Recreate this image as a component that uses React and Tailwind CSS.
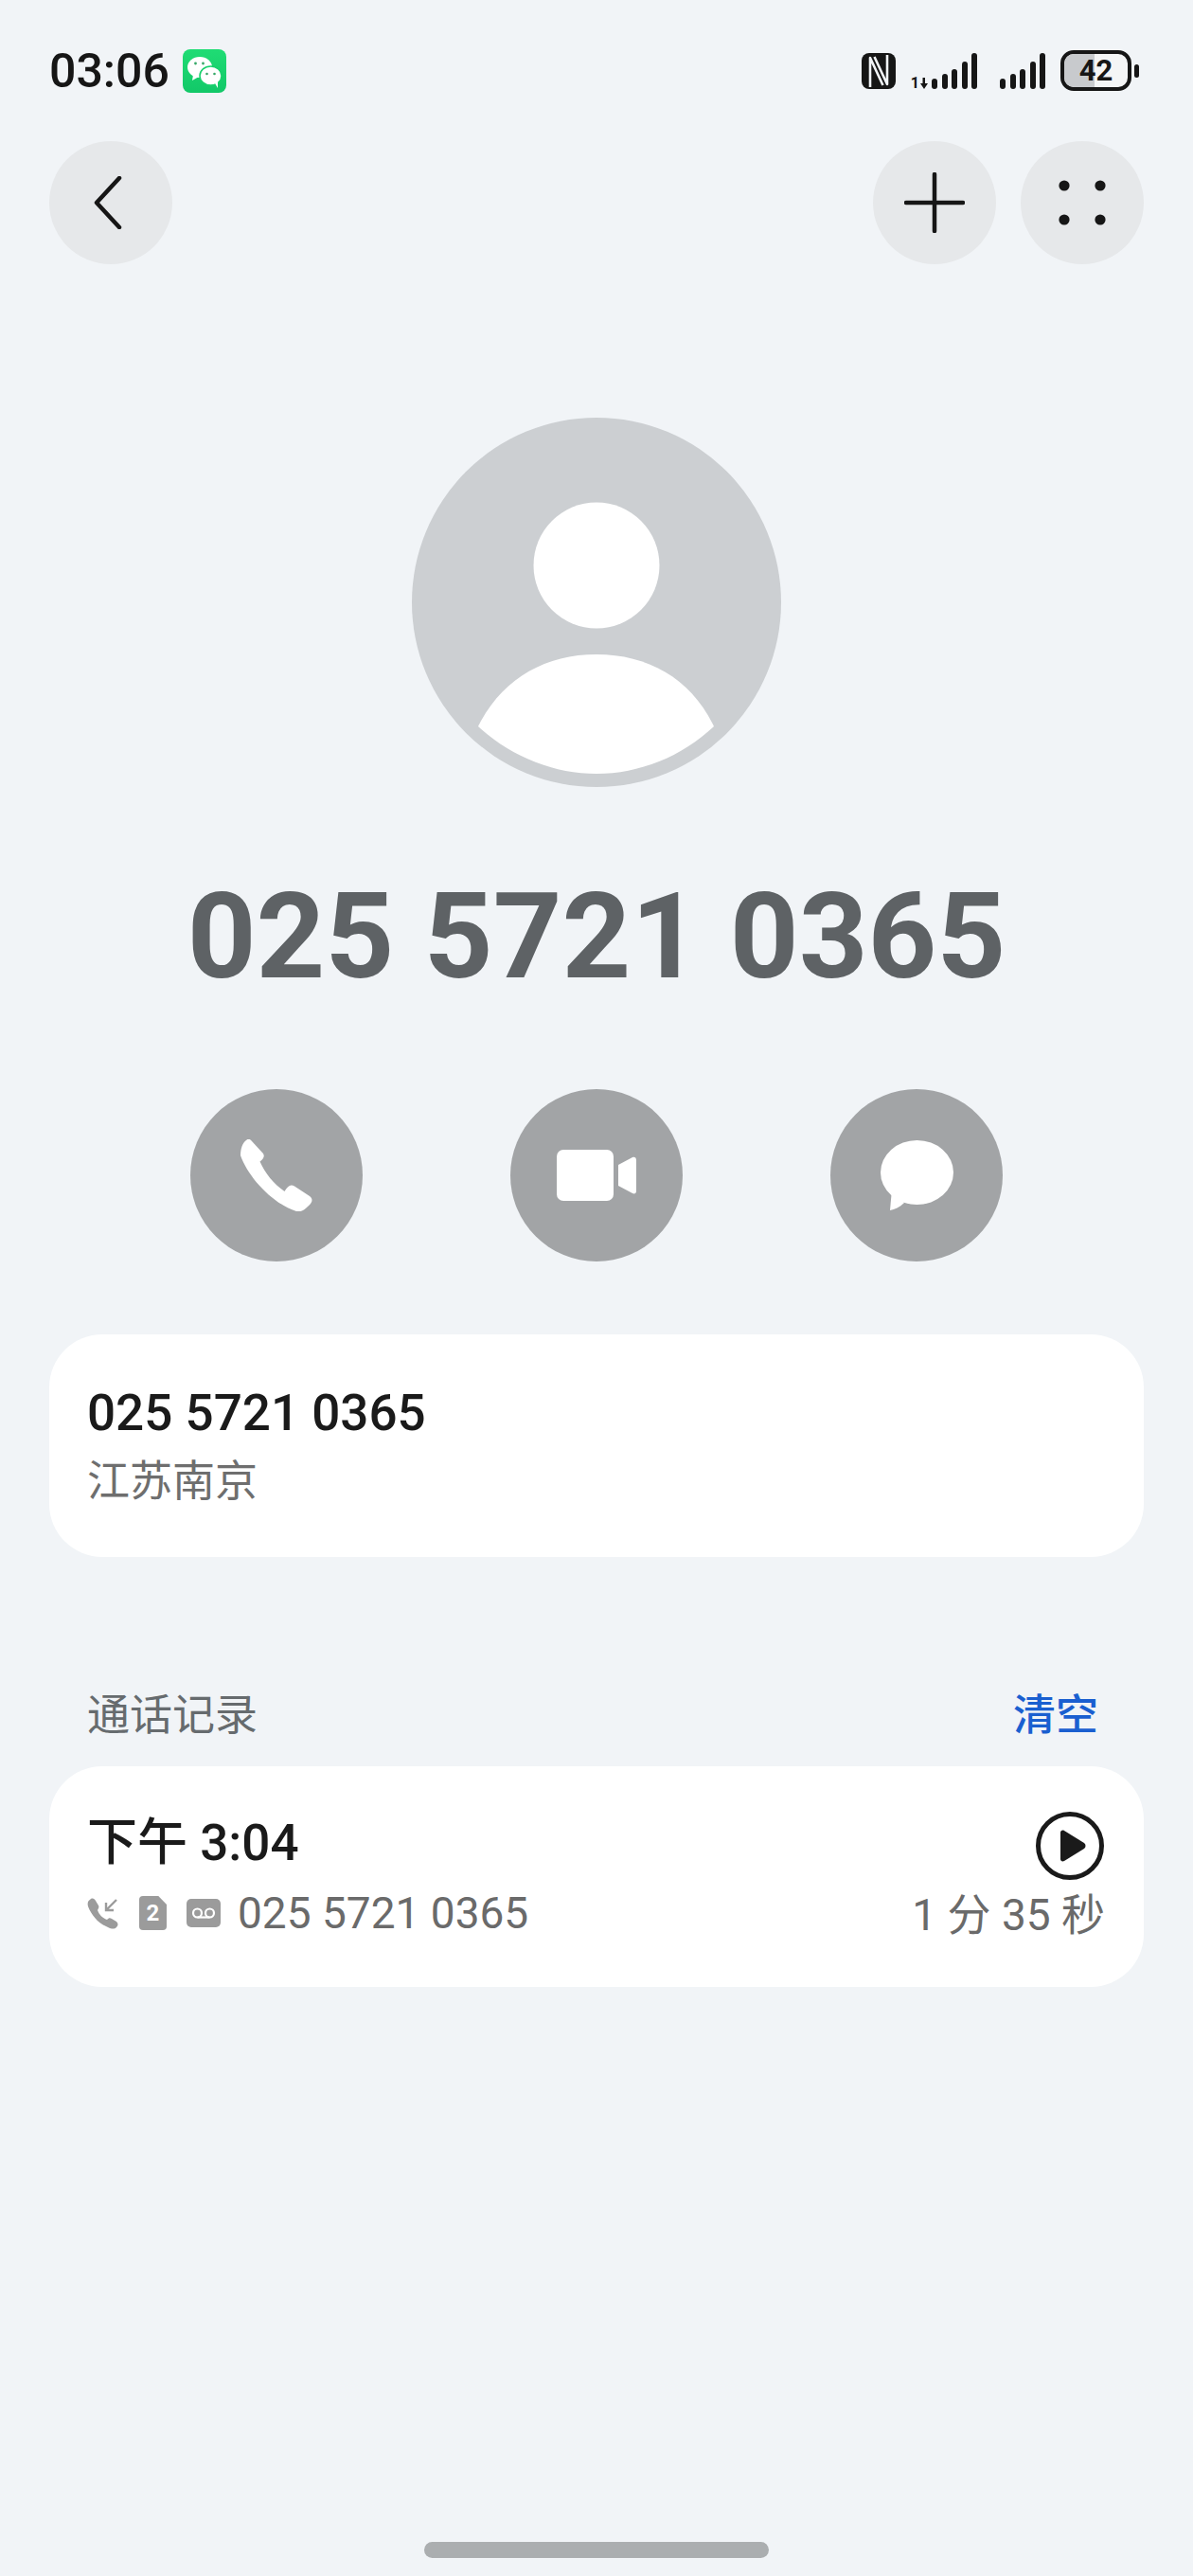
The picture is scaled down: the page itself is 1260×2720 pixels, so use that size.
const FONT = 'font-[Roboto,"Noto_Sans_CJK_SC",sans-serif]';

function WeChatIcon() {
  return (
    <svg width="46" height="46" viewBox="0 0 46 46">
      <defs>
        <linearGradient id="wx" x1="0" y1="0" x2="0" y2="1">
          <stop offset="0" stopColor="#1fdc74" />
          <stop offset="1" stopColor="#12c868" />
        </linearGradient>
      </defs>
      <rect width="46" height="46" rx="8" fill="url(#wx)" />
      <ellipse cx="18" cy="19" rx="13" ry="11" fill="#fff" />
      <path d="M11 27 L10 33 L17 29 Z" fill="#fff" />
      <ellipse cx="29.5" cy="28" rx="11.5" ry="10" fill="#fff" stroke="#18d06c" strokeWidth="1.5" />
      <path d="M34 36 L37 41 L37 33 Z" fill="#fff" />
      <circle cx="13.5" cy="15" r="1.4" fill="#38a868" />
      <circle cx="21.5" cy="15" r="1.4" fill="#38a868" />
      <circle cx="25.5" cy="26" r="1.3" fill="#38a868" />
      <circle cx="33.5" cy="26" r="1.3" fill="#38a868" />
    </svg>
  );
}

function NfcIcon() {
  return (
    <svg width="36" height="38" viewBox="0 0 36 38" fill="none">
      <rect width="36" height="38" rx="8" fill="#161616" />
      <path d="M9 36 V5 L22.500 34" stroke="#f1f4f7" strokeWidth="2.6" strokeLinejoin="round" />
      <path d="M27 2 V33 L13.500 4" stroke="#f1f4f7" strokeWidth="2.6" strokeLinejoin="round" />
    </svg>
  );
}

function SignalBars() {
  const bars = [11, 16, 21, 29, 38];
  return (
    <div className="flex items-end gap-[4.5px] h-[39px]">
      {bars.map((h) => (
        <div key={h} className="w-[6px] rounded-full bg-[#161616]" style={{ height: h }} />
      ))}
    </div>
  );
}

function Battery() {
  return (
    <div className="flex items-center gap-[3px]">
      <div className="relative w-[75px] h-[43px] rounded-[14px] border-[4px] border-[#161616] bg-[#f4f5f6] overflow-hidden flex items-center justify-center">
        <div className="absolute left-0 top-0 bottom-0 w-[32px] bg-[#c8cacd]" />
        <span className="relative text-[31px] leading-none font-bold text-[#161616]">42</span>
      </div>
      <div className="w-[5px] h-[14px] rounded-full bg-[#161616]" />
    </div>
  );
}

function RoundButton({ children }) {
  return (
    <div className="w-[130px] h-[130px] rounded-full bg-[#e6e8ea] flex items-center justify-center">
      {children}
    </div>
  );
}

function ActionButton({ children }) {
  return (
    <div className="w-[182px] h-[182px] rounded-full bg-[#a2a4a6] flex items-center justify-center">
      {children}
    </div>
  );
}

function VoicemailRowIcons() {
  return (
    <div className="flex items-center">
      <svg width="34" height="34" viewBox="0 0 34 34" fill="none">
        <path d="M4 2 C6 1 8 2 9 4 L12 9 C13 11 12 12 11 14 C13 19 16 22 21 24 C23 22 24 22 26 23 L31 26 C33 28 33 30 31 32 C29 34 26 34 22 32 C12 28 5 20 1 10 C0 6 1 4 4 2 Z" fill="#9b9b9b" />
        <path d="M31 3 L20 14 M20 6 V14 H28" stroke="#9b9b9b" strokeWidth="2.4" />
      </svg>
      <div className="relative ml-[21px] w-[29px] h-[36px] bg-[#9b9b9b] rounded-[4px] flex items-center justify-center [clip-path:polygon(0_0,70%_0,100%_25%,100%_100%,0_100%)]">
        <span className="text-[24px] leading-none font-bold text-white">2</span>
      </div>
      <svg className="ml-[21px]" width="36" height="30" viewBox="0 0 36 30">
        <rect width="36" height="30" rx="5" fill="#9b9b9b" />
        <circle cx="11.5" cy="15" r="4.5" fill="none" stroke="#fff" strokeWidth="2.2" />
        <circle cx="24.5" cy="15" r="4.5" fill="none" stroke="#fff" strokeWidth="2.2" />
        <path d="M11.5 19.5 H24.5" stroke="#fff" strokeWidth="2.2" />
      </svg>
    </div>
  );
}

export default function App() {
  return (
    <div className={`${FONT} relative w-[1260px] h-[2720px] bg-[#f1f4f7] flex flex-col overflow-hidden`}>
      {/* Status bar */}
      <div className="flex items-center justify-between pl-[52px] pr-[57px] pt-[53px] h-[96px]">
        <div className="flex items-center gap-[14px]">
          <span className="text-[50px] leading-none font-medium text-[#161616]">03:06</span>
          <WeChatIcon />
        </div>
        <div className="flex items-center">
          <NfcIcon />
          <div className="ml-[16px] flex items-end h-[39px]">
            <span className="text-[16px] leading-[12px] font-bold text-[#161616]">1</span>
            <svg className="ml-[1px]" width="8" height="12" viewBox="0 0 8 12">
              <path d="M2.500 0 V6 H0 L4 12 L8 6 H5 V0 Z" fill="#161616" />
            </svg>
            <div className="ml-[4px]"><SignalBars /></div>
          </div>
          <div className="ml-[24px]"><SignalBars /></div>
          <div className="ml-[16px]"><Battery /></div>
        </div>
      </div>

      {/* Header buttons */}
      <div className="mt-[53px] px-[52px] flex items-center justify-between">
        <RoundButton>
          <svg className="mr-[6px]" width="30" height="56" viewBox="0 0 30 56" fill="none">
            <path d="M27 2 L3 28 L27 54" stroke="#161616" strokeWidth="4.5" strokeLinecap="round" strokeLinejoin="round" />
          </svg>
        </RoundButton>
        <div className="flex gap-[26px]">
          <RoundButton>
            <svg width="64" height="64" viewBox="0 0 64 64" fill="none">
              <path d="M32 2 V62 M2 32 H62" stroke="#161616" strokeWidth="4.5" strokeLinecap="round" />
            </svg>
          </RoundButton>
          <RoundButton>
            <svg width="50" height="48" viewBox="0 0 50 48" fill="#161616">
              <circle cx="6" cy="6" r="5.6" />
              <circle cx="44" cy="6" r="5.6" />
              <circle cx="6" cy="42" r="5.6" />
              <circle cx="44" cy="42" r="5.6" />
            </svg>
          </RoundButton>
        </div>
      </div>

      {/* Avatar */}
      <svg className="mt-[162px] mx-auto" width="390" height="390" viewBox="0 0 390 390">
        <circle cx="195" cy="195" r="195" fill="#cccfd2" />
        <circle cx="195" cy="156" r="66.5" fill="#fff" />
        <path d="M70 326 C95 276 140 250 195 250 C250 250 295 276 319 326 C285 358 240 376 195 376 C150 376 105 358 70 326 Z" fill="#fff" />
      </svg>

      {/* Big number */}
      <div className="mt-[94px] text-center text-[127px] leading-[128px] font-bold text-[#5e6265]">
        025 5721 0365
      </div>

      {/* Call, video, message */}
      <div className="mt-[97px] flex justify-center gap-[156px]">
        <ActionButton>
          <svg width="76" height="76" viewBox="0 0 76 76" fill="#fff">
            <path d="M6 1 C8 -1 10 -0.500 12 2 L23 14 C26 17 25 20 20.500 23.500 C26 36 35 47 46.500 55 C50 49 53 47 57 49.500 L73 60 C77 63 76 67 71 71 C67 75 64 77 59 76 C34 68 8 40 0 17 C0 10 2 4 6 1 Z" />
          </svg>
        </ActionButton>
        <ActionButton>
          <svg width="84" height="54" viewBox="0 0 84 54" fill="#fff">
            <rect width="60" height="54" rx="7" />
            <path d="M65 16 L80 8 C82 7 84 8 84 11 V44 C84 46 82 47 80 46 L65 38 Z" />
          </svg>
        </ActionButton>
        <ActionButton>
          <svg width="77" height="74" viewBox="0 0 77 74" fill="#fff">
            <ellipse cx="38.5" cy="34" rx="38.5" ry="34" />
            <path d="M12 52 L10 74 C15 73 20 71 25 66 Z" />
          </svg>
        </ActionButton>
      </div>

      {/* Number card */}
      <div className="mt-[77px] mx-[52px] h-[235px] rounded-[56px] bg-white px-[40px] pt-[52px]">
        <div className="text-[53px] leading-[62px] font-medium text-[#1a1a1a]">025 5721 0365</div>
        <div className="mt-[12px] text-[45px] leading-[60px] text-[#6e6e6e]">江苏南京</div>
      </div>

      {/* Call log */}
      <div className="mt-[137px] pl-[92px] pr-[100px] flex items-center justify-between h-[60px]">
        <span className="text-[45px] leading-none text-[#666b6e]">通话记录</span>
        <span className="text-[45px] leading-none font-medium text-[#1a5fd0]">清空</span>
      </div>
      <div className="mt-[24px] mx-[52px] h-[233px] rounded-[56px] bg-white pl-[40px] pr-[42px] pt-[50px] flex justify-between">
        <div>
          <div className="h-[62px] flex items-center text-[53px] leading-none font-medium text-[#1a1a1a]">下午 3:04</div>
          <div className="mt-[18px] flex items-center h-[50px]">
            <VoicemailRowIcons />
            <span className="ml-[18px] text-[46px] leading-none text-[#6a6a6a]">025 5721 0365</span>
          </div>
        </div>
        <div className="flex flex-col items-end -mt-[2px]">
          <svg width="72" height="72" viewBox="0 0 72 72">
            <circle cx="36" cy="36" r="33.5" fill="none" stroke="#1a1a1a" strokeWidth="5" />
            <path d="M26 22 C26 20 28 19 30 20 L51 33 C53 34.500 53 37.500 51 39 L30 52 C28 53 26 52 26 50 Z" fill="#1a1a1a" />
          </svg>
          <span className="mt-[12px] -mr-[1px] text-[46px] leading-[50px] text-[#6a6a6a]">1 分 35 秒</span>
        </div>
      </div>

      {/* Home bar */}
      <div className="mt-auto mb-[19px] mx-auto w-[364px] h-[17px] rounded-full bg-[#abaeb0]" />
    </div>
  );
}
